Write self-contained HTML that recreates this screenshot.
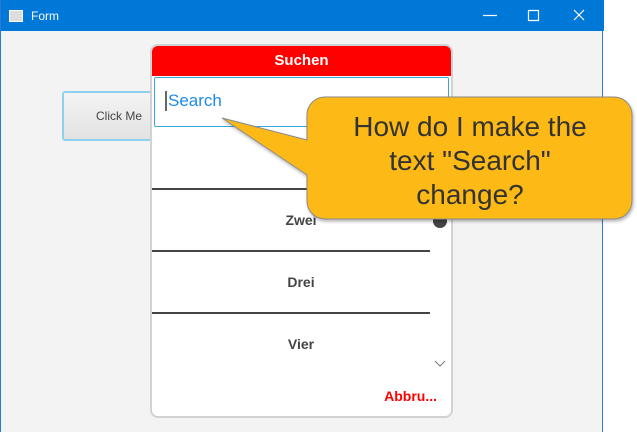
<!DOCTYPE html>
<html><head><style>
body{margin:0;width:637px;height:432px;background:#fff;position:relative;overflow:hidden;font-family:"Liberation Sans",sans-serif}
.win{position:absolute;left:0;top:0;width:603px;height:432px;background:#f3f3f3;border-right:1px solid #2b79d0;border-left:1px solid #2b79d0;box-sizing:border-box}
.tb{position:absolute;left:0;top:0;width:603px;height:31px;background:#0078d7;color:#fff;font-size:12px}
.btn{position:absolute;left:61px;top:91px;width:100px;height:50px;border:2px solid #8fd0ee;border-radius:3px;background:linear-gradient(#f4f4f4,#e2e2e2);box-sizing:border-box;font-size:12px;color:#444;line-height:46px;padding-left:32px}
.pop{position:absolute;left:150px;top:44px;width:303px;height:374px;background:#fff;border:2px solid #d2d2d2;border-radius:8px;box-sizing:border-box;overflow:hidden}
.hd{position:absolute;left:0;top:0;right:0;height:30px;background:#f00;color:#fff;font-weight:bold;font-size:15px;text-align:center;line-height:30px}
.sf{position:absolute;left:2px;top:31px;width:295px;height:50px;border:1px solid #3aa7db;border-radius:2px;box-sizing:border-box}
.sf span{position:absolute;left:10px;top:13px;font-size:17px;color:#1e8be6;border-left:2px solid #666;padding-left:1px}
.ln{position:absolute;left:0;width:278px;height:2px;background:#444}
.it{position:absolute;left:0;width:298px;text-align:center;font-weight:bold;font-size:14px;color:#444}
</style></head><body>
<div class="win">
<div class="tb">
<div style="position:absolute;left:8px;top:10px;width:12px;height:10px;background:#ddd;border:1px solid #fff"></div>
<span style="position:absolute;left:30px;top:9px">Form</span>
<svg style="position:absolute;left:470px;top:0" width="133" height="31" stroke="#fff" fill="none" stroke-width="1.2"><path d="M12 15.5h14"/><path d="M57.5 10.5h10v10h-10z"/><path d="M103 10l10 10M113 10l-10 10"/></svg>
</div>
<div class="btn">Click Me</div>
</div>
<div class="pop">
<div class="hd">Suchen</div>
<div class="sf"><span>Search</span></div>
<div class="it" style="top:100px">Eins</div>
<div class="ln" style="top:142px"></div>
<div class="it" style="top:166px">Zwei</div>
<div class="ln" style="top:204px"></div>
<div class="it" style="top:228px">Drei</div>
<div class="ln" style="top:266px"></div>
<div class="it" style="top:290px">Vier</div>
<div style="position:absolute;left:281px;top:168px;width:14px;height:14px;border-radius:50%;background:#444"></div>
<svg style="position:absolute;left:282px;top:314px" width="12" height="8"><path d="M1 1l5 5 5-5" stroke="#777" fill="none"/></svg>
<div style="position:absolute;right:14px;top:342px;color:#f00;font-weight:bold;font-size:14px">Abbru...</div>
</div>
<svg style="position:absolute;left:0;top:0" width="637" height="432">
<defs><filter id="s"><feDropShadow dx="1" dy="2" stdDeviation="1.5" flood-opacity="0.3"/></filter></defs>
<path filter="url(#s)" d="M325 97H614a18 18 0 0 1 18 18V201a18 18 0 0 1-18 18H325a18 18 0 0 1-18-18V175L222 118L307 140V115a18 18 0 0 1 18-18Z" fill="#fdb913" stroke="#8a8a8a" stroke-width="1"/>
<g font-family="Liberation Sans,sans-serif" font-size="28" fill="#333" text-anchor="middle">
<text x="470" y="136">How do I make the</text>
<text x="470" y="170">text "Search"</text>
<text x="470" y="204">change?</text>
</g></svg>
</body></html>
